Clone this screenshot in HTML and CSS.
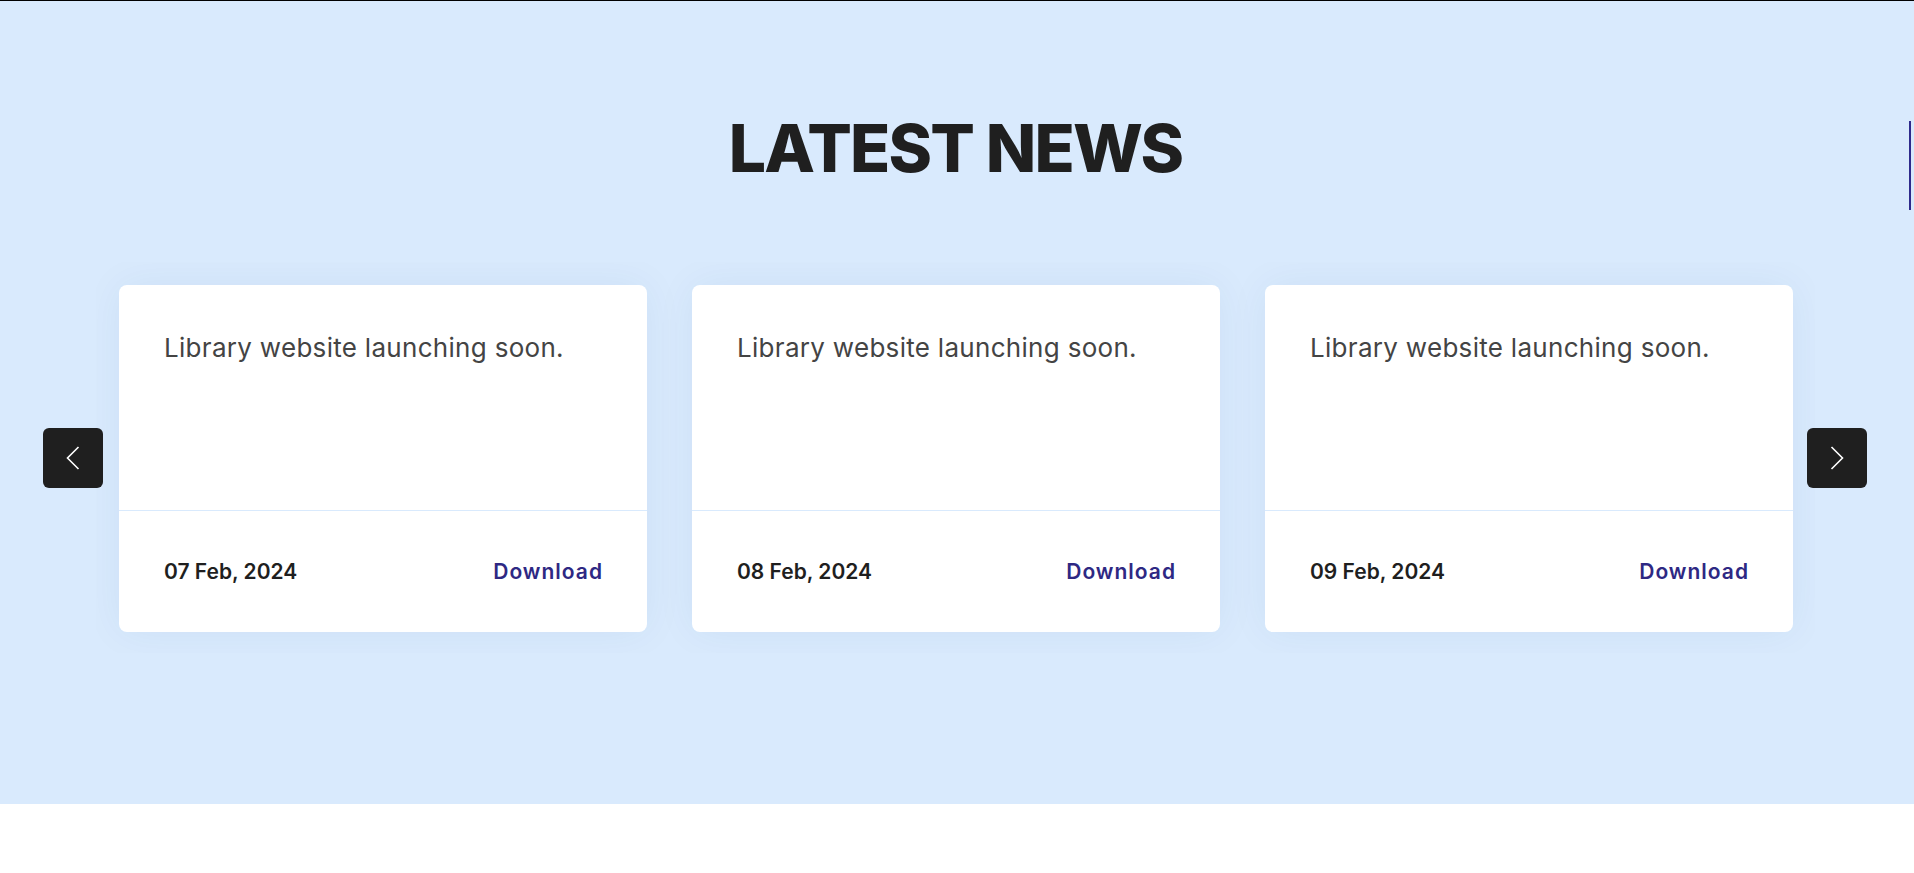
FILE: index.html
```html
<!DOCTYPE html>
<html lang="en">
<head>
<meta charset="utf-8">
<title>Latest News</title>
<link rel="stylesheet" href="styles.css">
</head>
<body>
<div class="topline"></div>
<section class="news">
  <h2 class="news-title">LATEST NEWS</h2>
  <div class="slider">
    <button class="arrow arrow-prev" aria-label="Previous">
      <svg width="60" height="60" viewBox="0 0 60 60"><polyline points="35.5,19 24.5,30 35.5,41" /></svg>
    </button>
    <div class="viewport">
      <div class="track">
        <article class="card">
          <div class="card-body"><p>Library website launching soon.</p></div>
          <div class="card-foot"><span class="date">07 Feb, 2024</span><a class="download" href="#">Download</a></div>
        </article>
        <article class="card">
          <div class="card-body"><p>Library website launching soon.</p></div>
          <div class="card-foot"><span class="date">08 Feb, 2024</span><a class="download" href="#">Download</a></div>
        </article>
        <article class="card">
          <div class="card-body"><p>Library website launching soon.</p></div>
          <div class="card-foot"><span class="date">09 Feb, 2024</span><a class="download" href="#">Download</a></div>
        </article>
      </div>
    </div>
    <button class="arrow arrow-next" aria-label="Next">
      <svg width="60" height="60" viewBox="0 0 60 60"><polyline points="24.5,19 35.5,30 24.5,41" /></svg>
    </button>
  </div>
</section>
<div class="side-indicator"></div>
</body>
</html>
```
FILE: styles.css
```css
* { box-sizing: border-box; }
html, body { margin: 0; padding: 0; background: #ffffff; }
body {
  font-family: "Inter", "Open Sans", "Liberation Sans", sans-serif;
  color: #1f1f1f;
  position: relative;
}
.topline { height: 1px; background: #000; }
.news {
  background: #d9eafd;
  height: 803px;
  padding: 108px 3px 0 0;
}
.news-title {
  margin: 0 0 74px;
  text-align: center;
  font-size: 66px;
  line-height: 1.2;
  font-weight: 800;
  letter-spacing: -1.8px;
  color: #1f1f1f;
}
.slider {
  position: relative;
  width: 1719px;
  margin: 0 auto;
}
.viewport {
  overflow: hidden;
  padding: 23px 22px 21px 23px;
}
.track {
  display: flex;
  gap: 45px;
}
.card {
  width: 528px;
  flex: 0 0 528px;
  background: #fff;
  border-radius: 8px;
  box-shadow: 0 0 40px rgba(40, 70, 120, 0.06);
}
.card-body {
  min-height: 225px;
  padding: 43px 45px 0;
}
.card-body p {
  margin: 0;
  font-size: 26px;
  line-height: 1.5;
  letter-spacing: 0.3px;
  color: #444;
  font-weight: 400;
}
.card-foot {
  height: 122px;
  border-top: 1px solid #d9eafd;
  display: flex;
  align-items: center;
  justify-content: space-between;
  padding: 0 44px 0 45px;
  font-size: 21px;
  font-weight: 600;
}
.date { color: #1f1f1f; }
.download { color: #2e2883; text-decoration: none; letter-spacing: 1px; }
.arrow {
  position: absolute;
  top: 50%;
  transform: translateY(-50%);
  width: 60px;
  height: 60px;
  padding: 0;
  border: none;
  border-radius: 6px;
  background: #1f1f1f;
  display: flex;
  align-items: center;
  justify-content: center;
  cursor: pointer;
}
.arrow svg { display: block; }
.arrow polyline { fill: none; stroke: #fff; stroke-width: 1.6; }
.arrow-prev { left: -53px; }
.arrow-next { right: -52px; }
.side-indicator {
  position: absolute;
  left: 1909px;
  top: 121px;
  width: 2px;
  height: 89px;
  background: #2e2a8c;
}
```
